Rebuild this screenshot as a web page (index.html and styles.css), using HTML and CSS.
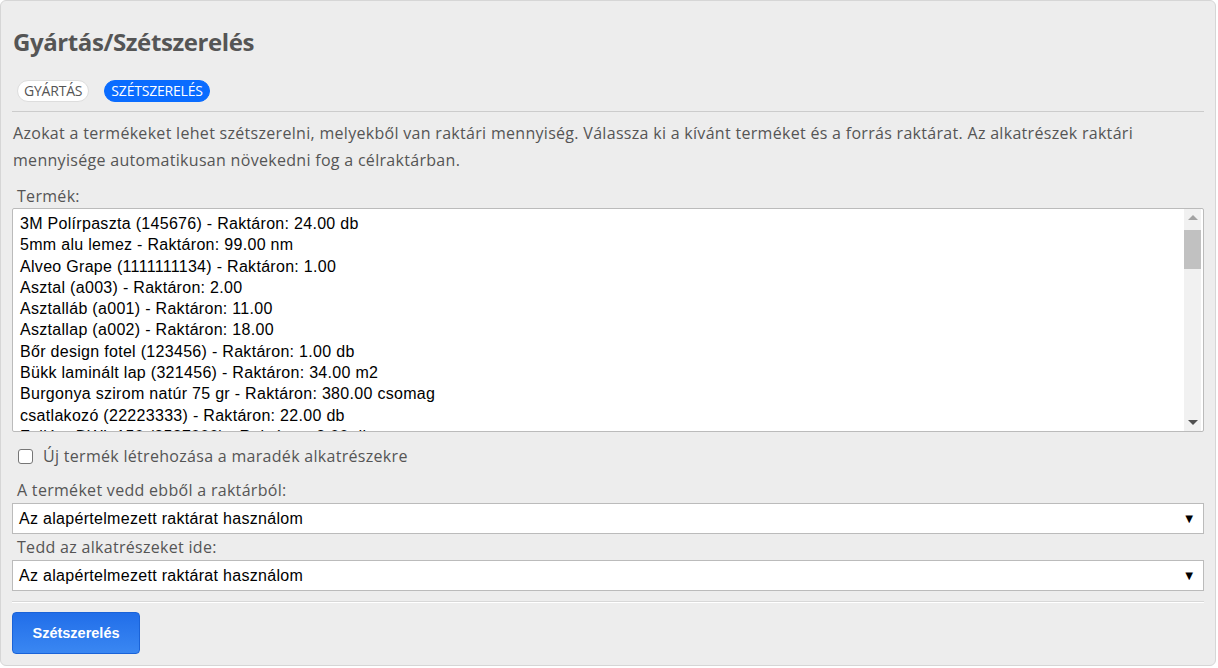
FILE: index.html
```html
<!DOCTYPE html>
<html lang="hu">
<head>
<meta charset="utf-8">
<title>Gyártás/Szétszerelés</title>
<link rel="stylesheet" href="styles.css">
</head>
<body>
<div class="card">
  <h1 class="title">Gyártás/Szétszerelés</h1>
  <div class="tabs">
    <span class="pill">GYÁRTÁS</span>
    <span class="pill active">SZÉTSZERELÉS</span>
  </div>
  <hr class="rule">
  <p class="desc">Azokat a termékeket lehet szétszerelni, melyekből van raktári mennyiség. Válassza ki a kívánt terméket és a forrás raktárat. Az alkatrészek raktári mennyisége automatikusan növekedni fog a célraktárban.</p>
  <div class="label first">Termék:</div>
  <div class="listbox">
    <div class="items">
      <div class="item">3M Polírpaszta (145676) - Raktáron: 24.00 db</div>
      <div class="item">5mm alu lemez - Raktáron: 99.00 nm</div>
      <div class="item">Alveo Grape (1111111134) - Raktáron: 1.00</div>
      <div class="item">Asztal (a003) - Raktáron: 2.00</div>
      <div class="item">Asztalláb (a001) - Raktáron: 11.00</div>
      <div class="item">Asztallap (a002) - Raktáron: 18.00</div>
      <div class="item">Bőr design fotel (123456) - Raktáron: 1.00 db</div>
      <div class="item">Bükk laminált lap (321456) - Raktáron: 34.00 m2</div>
      <div class="item">Burgonya szirom natúr 75 gr - Raktáron: 380.00 csomag</div>
      <div class="item">csatlakozó (22223333) - Raktáron: 22.00 db</div>
      <div class="item">Falióra DWL 150 (2587000) - Raktáron: 3.00 db</div>
    </div>
    <div class="scrollbar">
      <span class="sb-up"></span>
      <span class="sb-track"><span class="sb-thumb"></span></span>
      <span class="sb-down"></span>
    </div>
  </div>
  <label class="check"><span class="box"></span>Új termék létrehozása a maradék alkatrészekre</label>
  <div class="label">A terméket vedd ebből a raktárból:</div>
  <div class="select"><span>Az alapértelmezett raktárat használom</span><span class="arrow">▼</span></div>
  <div class="label">Tedd az alkatrészeket ide:</div>
  <div class="select"><span>Az alapértelmezett raktárat használom</span><span class="arrow">▼</span></div>
  <hr class="rule light">
  <div class="actions"><button class="btn">Szétszerelés</button></div>
</div>
</body>
</html>
```

FILE: styles.css
```css
html, body {
  margin: 0;
  padding: 0;
  background: #ffffff;
}
body {
  width: 1218px;
  height: 668px;
  overflow: hidden;
  font-family: "Open Sans", "Noto Sans", sans-serif;
}
.card {
  box-sizing: border-box;
  width: 1216px;
  height: 666px;
  background: #ededed;
  border: 1px solid #d6d6d6;
  border-radius: 6px;
  padding: 0 11px 0 11px;
  display: flex;
  flex-direction: column;
}
.title {
  margin: 25px 0 0 1px;
  font-size: 24px;
  line-height: 32px;
  font-weight: 700;
  color: #555555;
  letter-spacing: -0.4px;
}
.tabs {
  display: flex;
  gap: 15px;
  margin: 22px 0 0 5px;
}
.pill {
  font-size: 14px;
  line-height: 20px;
  height: 22px;
  box-sizing: border-box;
  padding: 0 6px;
  border-radius: 11px;
  border: 1px solid #dddddd;
  background: #ffffff;
  color: #555555;
  letter-spacing: -0.2px;
}
.pill.active {
  background: #0a6cff;
  border-color: #0a6cff;
  color: #ffffff;
}
.rule {
  border: 0;
  border-top: 1px solid #cccccc;
  margin: 9px 0 0 0;
  height: 0;
}
.rule.light {
  border-top: 1px solid #d8d8d8;
  border-bottom: 1px solid #ffffff;
  margin: 10px 0 0 0;
}
.desc {
  margin: 8px 0 0 1px;
  font-size: 16px;
  line-height: 27px;
  color: #555555;
  letter-spacing: 0.3px;
}
.label {
  margin: 3px 0 0 5px;
  font-size: 16px;
  line-height: 20px;
  color: #555555;
  letter-spacing: 0.3px;
}
.label.first {
  margin-top: 12px;
}
.listbox {
  margin-top: 2px;
  height: 224px;
  box-sizing: border-box;
  background: #ffffff;
  border: 1px solid #bbbbbb;
  border-radius: 2px;
  display: flex;
  overflow: hidden;
}
.items {
  flex: 1;
  padding: 4px 0 0 7px;
  overflow: hidden;
  font-family: "Liberation Sans", Arial, sans-serif;
  font-size: 16px;
  letter-spacing: 0.3px;
  color: #000000;
}
.item {
  line-height: 21.3px;
  white-space: nowrap;
}
.scrollbar {
  width: 17px;
  margin: 0 2px 0 0;
  background: #f1f1f1;
  display: flex;
  flex-direction: column;
  align-items: center;
}
.sb-up, .sb-down {
  height: 17px;
  width: 17px;
  position: relative;
}
.sb-up::after, .sb-down::after {
  content: "";
  position: absolute;
  left: 4px;
  width: 0;
  height: 0;
  border-left: 5px solid transparent;
  border-right: 5px solid transparent;
}
.sb-up::after {
  top: 6px;
  border-bottom: 5px solid #a3a3a3;
}
.sb-down::after {
  top: 6px;
  border-top: 5px solid #505050;
}
.sb-track {
  flex: 1;
  width: 17px;
}
.sb-thumb {
  display: block;
  width: 17px;
  height: 39px;
  margin-top: 4px;
  background: #c1c1c1;
}
.check {
  display: flex;
  align-items: center;
  margin: 14px 0 0 6px;
  font-size: 16px;
  line-height: 20px;
  color: #555555;
  letter-spacing: 0.3px;
}
.box {
  width: 13px;
  height: 13px;
  border: 1px solid #767676;
  border-radius: 3px;
  background: #ffffff;
  margin-right: 10px;
}
.check + .label {
  margin-top: 14px;
}
.select {
  margin-top: 3px;
  height: 31px;
  box-sizing: border-box;
  background: #ffffff;
  border: 1px solid #bbbbbb;
  display: flex;
  align-items: center;
  justify-content: space-between;
  padding: 0 7px 0 6px;
  font-family: "Liberation Sans", Arial, sans-serif;
  font-size: 16px;
  letter-spacing: 0.3px;
  color: #000000;
}
.arrow {
  font-size: 13px;
  color: #000000;
}
.actions {
  margin-top: 9px;
}
.btn {
  width: 128px;
  height: 42px;
  border: 1px solid #1a63d8;
  border-radius: 4px;
  background: linear-gradient(#216ee9, #3a87f2);
  color: #ffffff;
  font-family: "Liberation Sans", Arial, sans-serif;
  font-weight: 700;
  font-size: 14.5px;
  cursor: pointer;
}
```
